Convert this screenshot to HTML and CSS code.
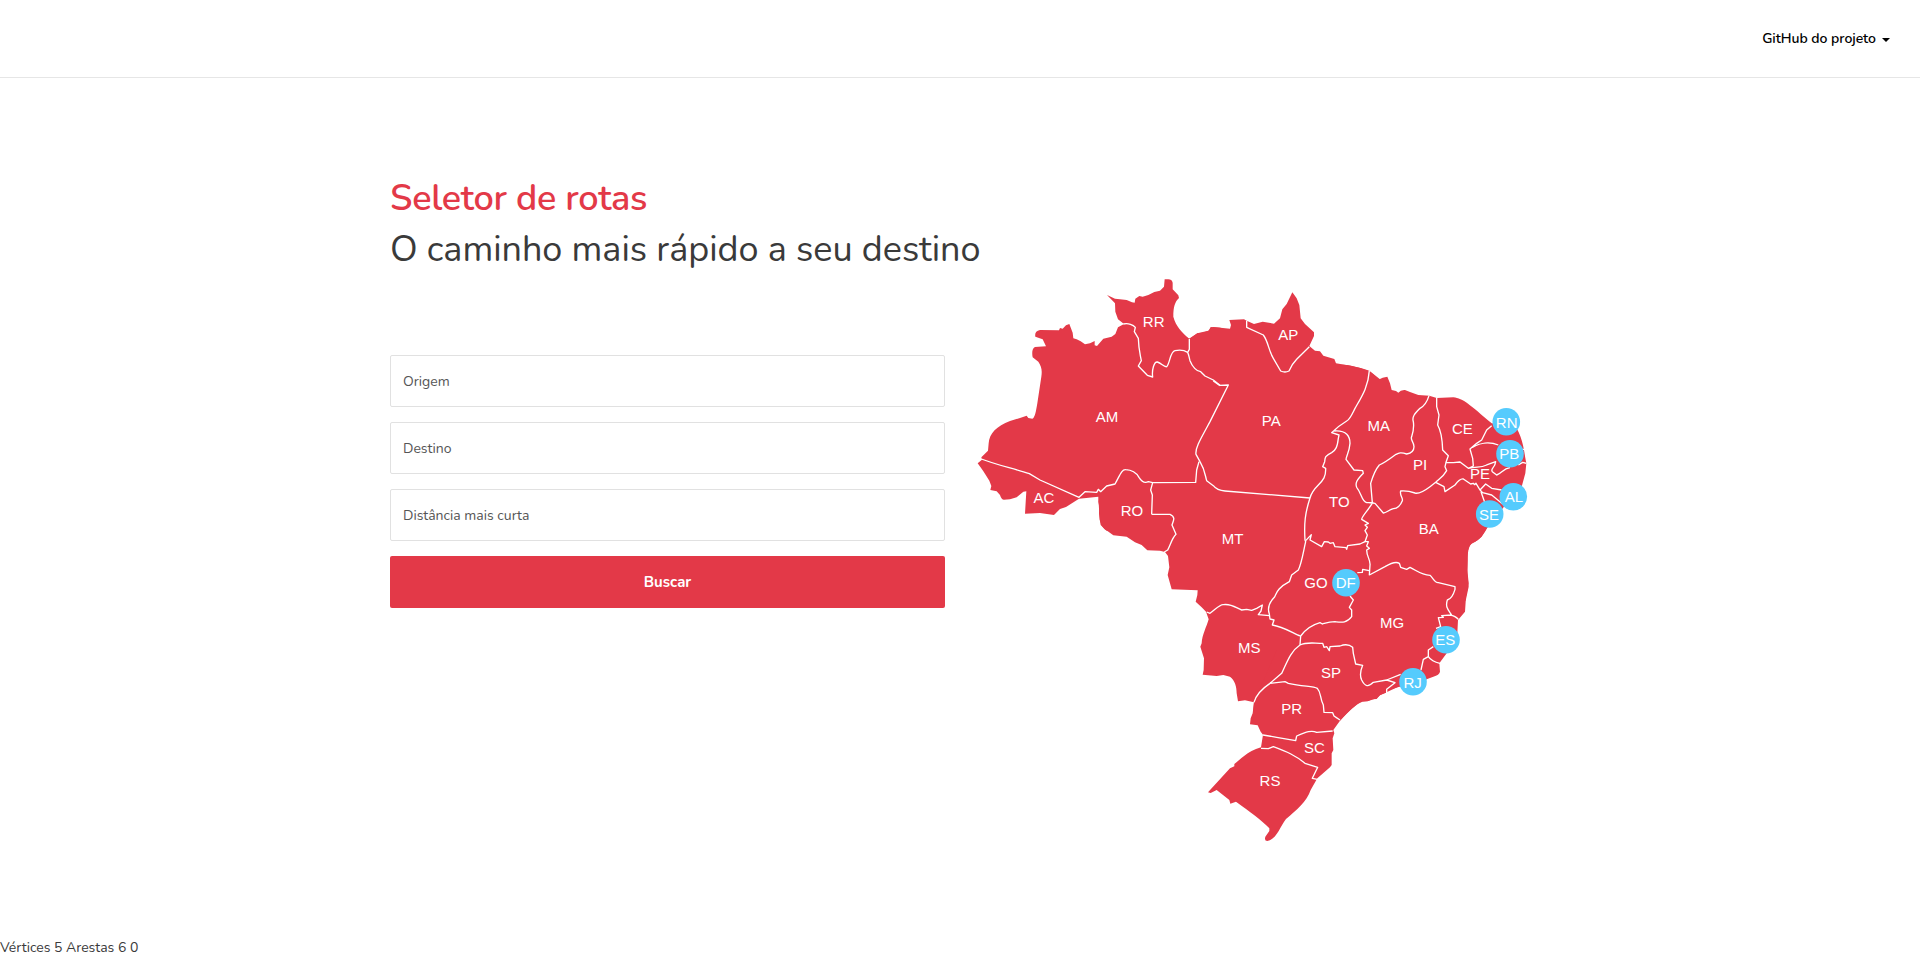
FILE: index.html
```html
<!DOCTYPE html>
<html lang="pt-BR">
<head>
<meta charset="utf-8">
<title>Seletor de rotas</title>
<link rel="stylesheet" href="styles.css">
</head>
<body>
<header class="navbar">
  <a class="nav-link">GitHub do projeto</a><span class="caret"></span>
</header>
<main class="container">
  <section class="intro">
    <h1 class="title">Seletor de rotas</h1>
    <h2 class="subtitle">O caminho mais rápido a seu destino</h2>
    <form class="form">
      <div class="field">Origem</div>
      <div class="field">Destino</div>
      <div class="field">Distância mais curta</div>
      <button class="button" type="button">Buscar</button>
    </form>
  </section>
  <svg class="map" viewBox="975 270 555 580" width="555" height="580" aria-label="Mapa do Brasil">
    <!-- land -->
    <g class="land">
      <path transform="translate(960 270) scale(.33333)" d="M782 173L752 171 746 182 728 188 712 190 688 207C665 185 648 170 640 140 640 110 645 95 657 84L655 76 638 58 638 38Q635 28 625 28L614 28 612 50 600 62 583 66 565 75 548 80 538 78 526 86 524 98 516 97 500 90 480 88 465 86 441 75 465 100 466 125 474 148 492 162 474 172 466 192 455 200 430 206 411 228 404 226 404 213 390 220 375 223 362 214 350 208 340 205 338 188 328 162 318 166 308 176 300 174 297 181 240 180C228 182 224 190 226 200L248 208 258 229 225 231C215 236 216 252 218 262L235 275C244 288 247 300 244 320L232 400C228 425 224 445 217 446L205 444 200 437 180 444 150 453C110 468 88 490 86 520L84 542 64 562 66 569 53 580C65 595 75 612 88 632L94 648 91 660 110 664 120 675Q124 689 132 689L150 688 170 682 190 665 199 664 195 731 240 729 282 735 300 717 318 711 357 686 415 680 417 715 419 750Q426 775 440 782L782 782Z"/>
      <path transform="translate(1180 270) scale(.33333)" d="M0 187L27 206 52 190 85 182Q92 173 100 171L150 176 153 165 148 150 192 148 200 152 222 162 248 155 282 161 300 145 307 118 320 102 337 67 350 85 358 105 362 145 375 162 402 187 402 198 388 228 405 242 420 244 430 257 463 267 468 280 510 287 545 295 568 302 600 328 600 780 0 780Z"/>
      <path transform="translate(1340 340) scale(.33333)" d="M0 74C30 74 50 80 78 90L88 94 100 103 115 119 128 113 142 110 150 130 155 150 168 153 175 158Q182 149 195 150L210 156 235 165 268 167 290 174 340 172C370 175 390 195 455 250L530 265C550 300 553 340 559 370L556 400 545 440 500 490 441 565C425 595 410 605 395 610 385 620 383 640 383 660L382 700 386 740 377 782 0 782Z"/>
      <path transform="translate(1080 480) scale(.33333)" d="M57 35V48L55 65 58 80 57 100 62 135 75 148 100 166 140 170 165 187 185 195 202 211 240 212 255 216 264 228 268 262 263 285 275 328 353 331 352 345 347 365 365 382 378 395 386 418C380 440 366 465 365 490L361 500 372 535 371 570 368 584 410 588 430 585 450 590C465 602 470 620 470 640L474 664 495 661 522 667 520 690 780 690 780 0 110 0Z"/>
      <path transform="translate(1270 520) scale(.33333)" d="M210 602C240 570 255 555 277 545L293 544 305 538 320 537 330 525 348 518 355 510 388 500 430 500 470 478 490 470Q508 465 510 455L508 430 530 400 562 340 564 300 585 275 588 230 596 190 592 150 593 100C595 75 605 70 615 66L635 50 650 25 655 0 0 0 0 602Z"/>
      <path transform="translate(1180 650) scale(.33333)" d="M222 157L218 190 212 205 210 223 233 226 242 245 249 254 243 292C200 305 180 330 163 342L163 349 150 355 84 427 92 429 110 420 130 436 148 450 151 461 168 455C210 485 245 510 268 535L268 543 256 560Q252 573 262 573C290 568 300 530 318 507 350 480 380 455 392 420L412 385 450 352 455 345 455 310 460 300 458 265 463 250 460 240 480 212C510 180 530 160 547 154L565 153 590 145 600 136 660 108 660 0 290 0Z"/>
    </g>
    <!-- state borders -->
    <g class="border">
      <path transform="translate(960 270) scale(.33333)" d="M490 162C505 158 520 165 526 172L523 185 535 205C536 240 540 250 544 272L535 288 562 316 578 321C575 300 582 275 592 276 605 280 612 292 620 290 630 280 630 245 645 242 660 239 675 242 683 247L688 238V207M683 247C687 255 687 262 690 272 697 290 710 305 722 305L735 318 760 330 780 346M64 567C110 585 160 595 208 611L240 630 357 682 375 665 410 667 415 658 422 665 440 648 465 642C480 615 485 598 497 599 520 600 530 610 537 622 545 635 555 640 565 635L578 638 707 637 710 600 717 575M578 638L572 660 577 675 575 733"/>
      <path transform="translate(1180 270) scale(.33333)" d="M120 346L145 345 90 455C60 510 45 535 48 553L60 575C75 600 75 615 80 632L100 647C110 660 120 662 135 663L390 684M120 347L100 333M200 152L200 172 250 195C265 215 265 240 280 265L302 303Q315 309 327 303C335 285 340 278 350 268L388 230M568 302C565 350 545 380 525 415 515 435 510 448 500 453 485 462 465 478 455 488L477 495 475 505C472 530 468 540 455 548 435 558 435 562 434 575L428 590 437 595C438 620 430 630 415 645 395 665 390 684 390 684M463 483C500 480 510 500 510 520 508 545 500 555 498 568L522 600 548 602 550 610C530 630 525 640 530 652 545 670 545 695 560 698L580 698"/>
      <path transform="translate(1340 340) scale(.33333)" d="M267 167C260 190 250 200 240 205 225 220 215 230 220 245 223 265 220 275 215 290 210 300 222 305 222 320 222 335 210 340 200 342 180 335 175 340 165 345 145 360 130 370 118 375 105 390 98 410 92 430L97 488M290 174V200L297 225 293 255C305 275 307 300 308 330L325 347 318 367 315 380 320 392C310 410 300 415 287 427L270 440C250 455 235 462 225 459 205 452 195 452 182 453 178 465 190 475 187 482 180 500 170 505 160 506 145 510 140 518 130 519L105 490 88 488M318 367L340 368 360 366 385 385 400 378 398 355 390 327 410 310 425 300 440 270 455 257M397 322C420 308 450 305 475 315M385 385C410 378 420 385 440 375L467 365C465 385 450 385 457 395L470 405C485 400 490 385 510 383M535 375L548 367 559 370M545 328H553M287 427L312 440 315 455 345 435Q360 415 370 417L392 432 400 430 404 434 408 430 420 450 437 432 455 445 485 450M420 450L428 458 455 465 488 492M423 455L435 490M98 488C85 510 65 530 65 538L85 550 75 555 82 562 75 572 82 585 75 605 85 605 80 618 88 625 80 630C80 650 92 660 90 675L88 706"/>
      <path transform="translate(1080 480) scale(.33333)" d="M215 103H270C290 112 278 125 276 135L288 163C275 175 270 200 263 210L253 216M690 54C675 100 672 130 675 180L677 185C670 215 665 250 655 270L635 285 628 305C590 325 590 340 583 352 565 370 562 385 568 402L570 417 582 420 577 435C610 440 640 460 661 468M380 396L390 400C410 385 420 373 430 374 455 370 470 385 485 390L500 388 515 391 530 385 547 375 543 393 535 404 568 407"/>
      <path transform="translate(1270 520) scale(.33333)" d="M107 62L124 44 120 60 155 80 163 65 175 66 180 70 190 68 195 80 228 83 230 88 233 77 270 72 285 65M298 165L345 140C370 125 380 125 388 130L392 142 410 148 420 142C445 155 455 165 480 166 490 175 495 190 505 188L555 200V208C550 225 540 238 532 240 525 262 535 270 545 285L515 287 520 292 505 293 512 320 498 325M540 285Q557 288 565 298M298 152L278 148 277 157 262 158M240 228L250 240 238 262 245 270V290C230 310 215 307 195 305 175 305 165 310 157 312L150 308C125 315 105 330 92 348L90 375M0 490L35 460C50 430 60 395 90 375 110 365 130 370 158 370L162 382 170 380 178 392 180 380 210 378C230 370 240 375 248 382L250 400 257 432 278 436C272 450 268 465 275 480 285 500 295 502 310 487L350 480 392 463M350 480L375 488 350 508 350 520M490 380L475 390V410L460 418 453 450M475 410C485 425 500 428 510 430M0 490L45 485 55 490C100 500 130 498 142 505 155 520 148 530 160 555L162 577 188 578 192 588 198 592 210 600"/>
      <path transform="translate(1180 650) scale(.33333)" d="M222 157C228 135 240 120 270 100M249 255L290 262 347 272 350 258C380 245 395 240 410 247L458 243M243 295L265 296 280 290C320 305 345 315 375 340L413 352 397 385 412 388"/>
    </g>
    <g class="pin">
      <circle cx="1506.3" cy="421.7" r="13.8"/><circle cx="1510" cy="453.7" r="13.8"/>
      <circle cx="1513.3" cy="496.7" r="13.8"/><circle cx="1489.7" cy="514" r="13.8"/>
      <circle cx="1346" cy="582.7" r="13.8"/><circle cx="1446" cy="639.7" r="13.8"/>
      <circle cx="1413" cy="681.7" r="13.8"/>
    </g>
    <g class="label">
      <text x="1153.7" y="327.2">RR</text><text x="1107" y="422">AM</text><text x="1044" y="503.3">AC</text>
      <text x="1132" y="516.2">RO</text><text x="1288.3" y="340.2">AP</text><text x="1271.3" y="426.3">PA</text>
      <text x="1378.7" y="431.2">MA</text><text x="1420" y="470.2">PI</text><text x="1462.3" y="434">CE</text>
      <text x="1480" y="479.2">PE</text><text x="1506.7" y="428.2">RN</text><text x="1509.3" y="459.2">PB</text>
      <text x="1514" y="502.2">AL</text><text x="1489" y="520.2">SE</text><text x="1339.3" y="507.2">TO</text>
      <text x="1428.7" y="534">BA</text><text x="1232.7" y="544.3">MT</text><text x="1316" y="588.3">GO</text>
      <text x="1249.3" y="653.3">MS</text><text x="1345.7" y="588.3">DF</text><text x="1392" y="628.3">MG</text>
      <text x="1445.3" y="645.2">ES</text><text x="1412.7" y="688.2">RJ</text><text x="1331" y="678.3">SP</text>
      <text x="1291.7" y="714.3">PR</text><text x="1314.3" y="753.3">SC</text><text x="1270" y="786.2">RS</text>
    </g>
  </svg>
</main>
<footer class="status">Vértices 5 Arestas 6 0</footer>
</body>
</html>
```

FILE: styles.css
```css
* { box-sizing: border-box; }
body {
  margin: 0;
  height: 958px;
  display: flex;
  flex-direction: column;
  overflow: hidden;
  background: #fff;
  color: #3a3a3a;
  font-family: Nunito, Lato, sans-serif;
  font-size: 14px;
}
.navbar {
  height: 78px;
  flex: none;
  display: flex;
  align-items: center;
  justify-content: flex-end;
  padding: 0 30px 1px 0;
  border-bottom: 1px solid #e6e6e6;
}
.nav-link { color: #000; font-weight: 600; letter-spacing: -.04px; }
.caret {
  margin: 4px 0 0 6px;
  border: 4px solid transparent;
  border-top-color: #000;
  border-bottom: 0;
}
.container { flex: 1; display: flex; gap: 30px; padding-left: 390px; }
.intro { width: 555px; padding-top: 95px; }
.title, .subtitle { margin: 0; line-height: 51px; white-space: nowrap; font-size: 36px; font-weight: 400; letter-spacing: -.03px; }
.title { color: #e33948; font-weight: 600; letter-spacing: -.26px; }
.form { margin-top: 80px; display: flex; flex-direction: column; gap: 15px; }
.field {
  height: 52px;
  display: flex;
  align-items: center;
  padding-left: 12px;
  border: 1px solid #e1e1e1;
  border-radius: 2px;
  color: #555;
}
.button {
  height: 52px;
  border: 0;
  border-radius: 2px;
  background: #e33948;
  color: #fff;
  font: 700 15px Nunito, Lato, sans-serif;
}
.map { margin-top: 192px; overflow: visible; }
.land { fill: #e33948; }
.border { fill: none; stroke: #fff; stroke-width: 4; stroke-linejoin: round; }
.pin { fill: #55cbfd; }
.label { fill: #fff; font: 15px "Liberation Sans", Arial, sans-serif; text-anchor: middle; }
.status { height: 23px; flex: none; line-height: 26px; }
```
